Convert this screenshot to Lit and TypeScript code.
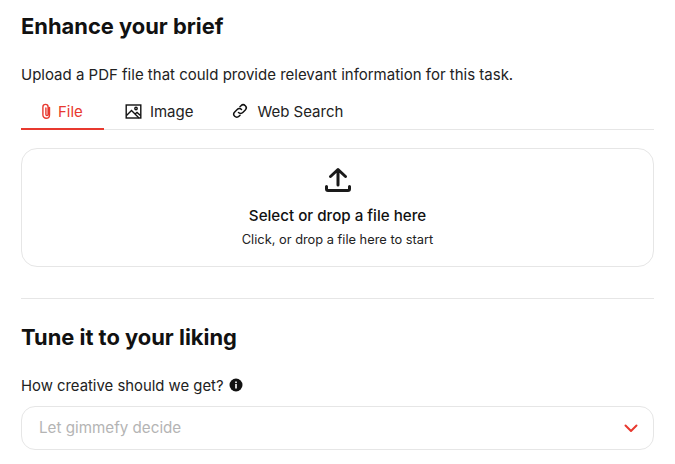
import { LitElement, html, css } from "lit";
import { customElement } from "lit/decorators.js";

@customElement("app-root")
export class AppRoot extends LitElement {
  static styles = css`
    :host { display: block; width: 675px; height: 464px; overflow: hidden; background: #fff; font-family: "Inter", "Open Sans", sans-serif; color: #111; box-sizing: border-box; padding: 0 21px; }
    h2 { margin: 0; font-size: 21.900px; line-height: 28px; font-weight: 700; }
    .h1 { padding-top: 12px; }
    .desc { margin: 25px 0 0; font-size: 15px; line-height: 20px; color: #222; }
    .tabs { display: flex; border-bottom: 1px solid #e6e6e6; margin-top: 8px; height: 37px; box-sizing: border-box; }
    .tab { display: flex; align-items: center; font-size: 15px; color: #222; height: 37px; box-sizing: border-box; padding-bottom: 1px; }
    .tab.a { color: #e8392f; box-shadow: inset 0 -2px 0 #e8392f; padding: 0 21px 1px 17px; gap: 4px; }
    .tab.b { padding: 0 20px 1px 21px; gap: 8px; }
    .tab.c { padding: 0 0 1px 19px; gap: 9px; }
    .drop { margin-top: 18px; height: 119px; border: 1px solid #e6e6e6; border-radius: 16px; display: flex; flex-direction: column; align-items: center; box-sizing: border-box; padding-top: 18px; }
    .t1 { font-size: 15.150px; font-weight: 500; margin-top: 13px; line-height: 20px; }
    .t2 { font-size: 12.830px; margin-top: 6px; line-height: 16px; color: #222; }
    hr { border: 0; border-top: 1px solid #e6e6e6; margin: 31px 0 0; }
    .h2 { margin-top: 24px; }
    .lbl { display: flex; align-items: center; gap: 5px; margin-top: 25px; font-size: 14.870px; line-height: 20px; color: #222; }
    .lbl svg { margin-top: -2px; }
    .sel { margin-top: 10px; height: 44px; border: 1px solid #e6e6e6; border-radius: 14px; box-sizing: border-box; display: flex; align-items: center; justify-content: space-between; padding: 0 14px 2px 17px; color: #b4b4b4; font-size: 15.200px; }
    .sel svg { margin-top: 2px; }
    svg { display: block; }
  `;
  render() {
    return html`
      <h2 class="h1">Enhance your brief</h2>
      <p class="desc">Upload a PDF file that could provide relevant information for this task.</p>
      <div class="tabs">
        <div class="tab a"><svg width="16" height="16" viewBox="0 0 16 16" fill="none" stroke="currentColor" stroke-width="1.400" stroke-linecap="round"><path d="M11.500 4.500v7.500a3.300 3.300 0 0 1-6.600 0V4a2.600 2.600 0 0 1 5.200 0v7.500a1.100 1.100 0 0 1-2.200 0V5"/></svg>File</div>
        <div class="tab b"><svg width="17" height="17" viewBox="0 0 17 17" fill="none" stroke="#111" stroke-width="1.400"><rect x="1.200" y="2" width="14.600" height="13"/><path d="M1.500 12.500l5-5 7.500 7.500M10 11l2-1.500 3.500 3"/><circle cx="11" cy="5.500" r="1.200"/></svg>Image</div>
        <div class="tab c"><svg width="16" height="16" viewBox="0 0 16 16" fill="none" stroke="#111" stroke-width="1.500" stroke-linecap="round"><path d="M6.500 9.500a3 3 0 0 0 4.300 0l2.500-2.500a3 3 0 0 0-4.300-4.300L8 3.700"/><path d="M9.500 6.500a3 3 0 0 0-4.300 0L2.700 9a3 3 0 0 0 4.300 4.300l1-1"/></svg>Web Search</div>
      </div>
      <div class="drop">
        <svg width="28" height="26" viewBox="0 0 28 26" fill="none" stroke="#1a1a1a" stroke-width="3" stroke-linecap="round" stroke-linejoin="round"><path d="M14 18V2.500M6.500 9.500L14 2.500l7.500 7"/><path d="M2.500 19.500v2.500a1.500 1.500 0 0 0 1.500 1.500h20a1.500 1.500 0 0 0 1.500-1.500v-2.500"/></svg>
        <div class="t1">Select or drop a file here</div>
        <div class="t2">Click, or drop a file here to start</div>
      </div>
      <hr />
      <h2 class="h2">Tune it to your liking</h2>
      <div class="lbl">How creative should we get? <svg width="14" height="14" viewBox="0 0 14 14"><circle cx="7" cy="7" r="6.500" fill="#111"/><rect x="6.200" y="6" width="1.600" height="4.500" fill="#fff"/><rect x="6.200" y="3.500" width="1.600" height="1.600" fill="#fff"/></svg></div>
      <div class="sel">Let gimmefy decide<svg width="16" height="16" viewBox="0 0 16 16" fill="none" stroke="#e8392f" stroke-width="2" stroke-linecap="round" stroke-linejoin="round"><path d="M2.500 5.500L8 11l5.500-5.500"/></svg></div>
    `;
  }
}
